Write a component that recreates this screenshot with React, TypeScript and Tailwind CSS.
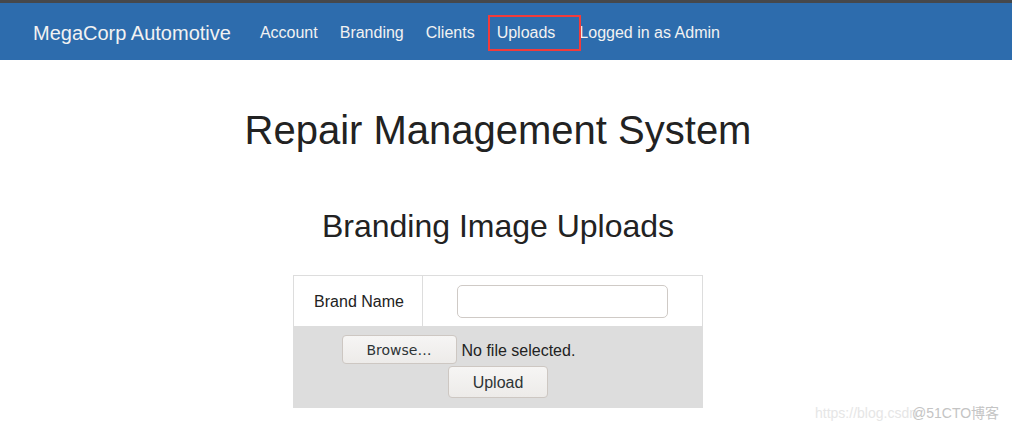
import React from "react";

export default function App() {
  const font = { fontFamily: '"Liberation Sans", Arial, sans-serif' };
  return (
    <div className="relative w-[1012px] h-[431px] bg-white overflow-hidden" style={font}>
      <div className="h-[3px] bg-[#46484b]" />
      <nav className="h-[57px] bg-[#2d6cad] flex items-center pl-[33px] pt-[2px] text-[#f2f2f2]">
        <span className="text-[20px] leading-none">MegaCorp Automotive</span>
        <span className="ml-[29px] text-[16px] leading-none">Account</span>
        <span className="ml-[22px] text-[16px] leading-none">Branding</span>
        <span className="ml-[22px] text-[16px] leading-none">Clients</span>
        <span className="relative ml-[22px] text-[16px] leading-none">
          Uploads
          <span className="absolute -left-[9px] top-1/2 -translate-y-1/2 w-[93px] h-[36px] border-2 border-[#f23b3b]" />
        </span>
        <span className="ml-[24px] text-[16px] leading-none">Logged in as Admin</span>
      </nav>
      <main className="w-[996px] flex flex-col items-center text-[#222]">
        <h1 className="mt-[48px] text-[40px] leading-[44px]">Repair Management System</h1>
        <h2 className="mt-[57px] text-[32px] leading-[35px]">Branding Image Uploads</h2>
        <div className="mt-[31px] w-[410px] border border-[#dddddd]">
          <div className="flex h-[50px] bg-white">
            <div className="w-[129px] border-r border-[#dddddd] flex items-center justify-center text-[16px] text-[#222] pl-[2px] pt-[2px]">
              Brand Name
            </div>
            <div className="flex-1 flex items-center justify-center">
              <div className="w-[211px] h-[33px] rounded-[5px] border border-[#cfcac6] bg-white" />
            </div>
          </div>
          <div className="h-[81px] bg-[#dddddd] flex flex-col items-center pt-[9px] gap-[2px]">
            <div className="w-[313px] flex items-center">
              <div
                className="w-[115px] h-[29px] rounded-[4px] border border-[#cdc7c2] bg-gradient-to-b from-[#f6f5f4] to-[#edebe9] flex items-center justify-center text-[14px] text-[#2e3436] pt-[2px]"
                style={{ fontFamily: '"DejaVu Sans", sans-serif' }}
              >
                Browse…
              </div>
              <span className="ml-[5px] text-[16px] text-[#222] pt-[2px]">No file selected.</span>
            </div>
            <div className="w-[100px] h-[32px] rounded-[4px] border border-[#cdc7c2] bg-gradient-to-b from-[#f6f5f4] to-[#edebe9] flex items-center justify-center text-[16px] text-[#2e3436] pt-[2px]">
              Upload
            </div>
          </div>
        </div>
      </main>
      <div className="absolute left-[815px] top-[404px] text-[14px] leading-[18px] text-[#e6e6e6] whitespace-nowrap">
        https://blog.csdn
        <span
          className="absolute left-[97px] top-0 text-[#c4c4c4]"
          style={{ fontFamily: '"Liberation Sans", "Noto Sans CJK SC", sans-serif' }}
        >
          @51CTO博客
        </span>
      </div>
    </div>
  );
}
